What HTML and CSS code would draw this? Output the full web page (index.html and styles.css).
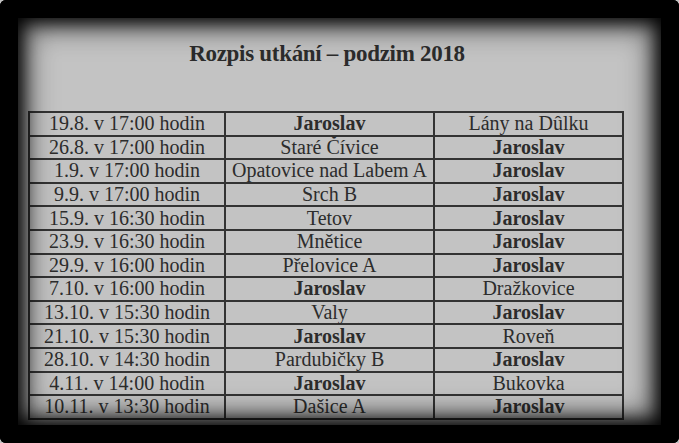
FILE: index.html
```html
<!DOCTYPE html>
<html lang="cs">
<head>
<meta charset="utf-8">
<title>Rozpis utkání – podzim 2018</title>
<link rel="stylesheet" href="styles.css">
</head>
<body>
<div class="frame">
  <div class="paper">
    <h1 class="title">Rozpis utkání – podzim 2018</h1>
    <table class="schedule">
      <colgroup><col class="c1"><col class="c2"><col class="c3"></colgroup>
      <tbody>
        <tr><td>19.8. v 17:00 hodin</td><td class="b">Jaroslav</td><td>Lány na Dûlku</td></tr>
        <tr><td>26.8. v 17:00 hodin</td><td>Staré Čívice</td><td class="b">Jaroslav</td></tr>
        <tr><td>1.9. v 17:00 hodin</td><td>Opatovice nad Labem A</td><td class="b">Jaroslav</td></tr>
        <tr><td>9.9. v 17:00 hodin</td><td>Srch B</td><td class="b">Jaroslav</td></tr>
        <tr><td>15.9. v 16:30 hodin</td><td>Tetov</td><td class="b">Jaroslav</td></tr>
        <tr><td>23.9. v 16:30 hodin</td><td>Mnětice</td><td class="b">Jaroslav</td></tr>
        <tr><td>29.9. v 16:00 hodin</td><td>Přelovice A</td><td class="b">Jaroslav</td></tr>
        <tr><td>7.10. v 16:00 hodin</td><td class="b">Jaroslav</td><td>Dražkovice</td></tr>
        <tr><td>13.10. v 15:30 hodin</td><td>Valy</td><td class="b">Jaroslav</td></tr>
        <tr><td>21.10. v 15:30 hodin</td><td class="b">Jaroslav</td><td>Roveň</td></tr>
        <tr><td>28.10. v 14:30 hodin</td><td>Pardubičky B</td><td class="b">Jaroslav</td></tr>
        <tr><td>4.11. v 14:00 hodin</td><td class="b">Jaroslav</td><td>Bukovka</td></tr>
        <tr><td>10.11. v 13:30 hodin</td><td>Dašice A</td><td class="b">Jaroslav</td></tr>
      </tbody>
    </table>
  </div>
  <div class="vignette"></div>
</div>
</body>
</html>
```

FILE: styles.css
```css
html, body {
  margin: 0;
  padding: 0;
  background: #000;
}
.frame {
  position: relative;
  width: 679px;
  height: 443px;
  overflow: hidden;
  background: #000;
}
.paper {
  width: 679px;
  height: 443px;
  box-sizing: border-box;
  padding: 40px 0 0 28px;
  background: #c3c3c3;
  font-family: "Liberation Serif", "Times New Roman", serif;
  color: #2a2a2a;
}
.title {
  margin: 0 0 43px 0;
  width: 598px;
  text-align: center;
  font-size: 23px;
  line-height: 28px;
  font-weight: bold;
  letter-spacing: -0.3px;
  color: #2c2c2c;
}
.schedule {
  border-collapse: collapse;
  width: 594px;
  table-layout: fixed;
  font-size: 20px;
}
.c1 { width: 196px; }
.c2 { width: 209px; }
.c3 { width: 189px; }
.schedule td {
  border: 2px solid #333;
  height: 21.6px;
  padding: 0;
  line-height: 21px;
  text-align: center;
  white-space: nowrap;
  color: #2c2c2c;
}
.schedule td.b {
  font-weight: bold;
}
.vignette {
  position: absolute;
  left: 0;
  top: 0;
  width: 679px;
  height: 443px;
  pointer-events: none;
  box-shadow:
    inset 0 0 0 18px #000,
    inset 0 0 18px 22px #000,
    inset 0 0 30px 26px rgba(0,0,0,0.6);
  border-radius: 6px;
}
```
